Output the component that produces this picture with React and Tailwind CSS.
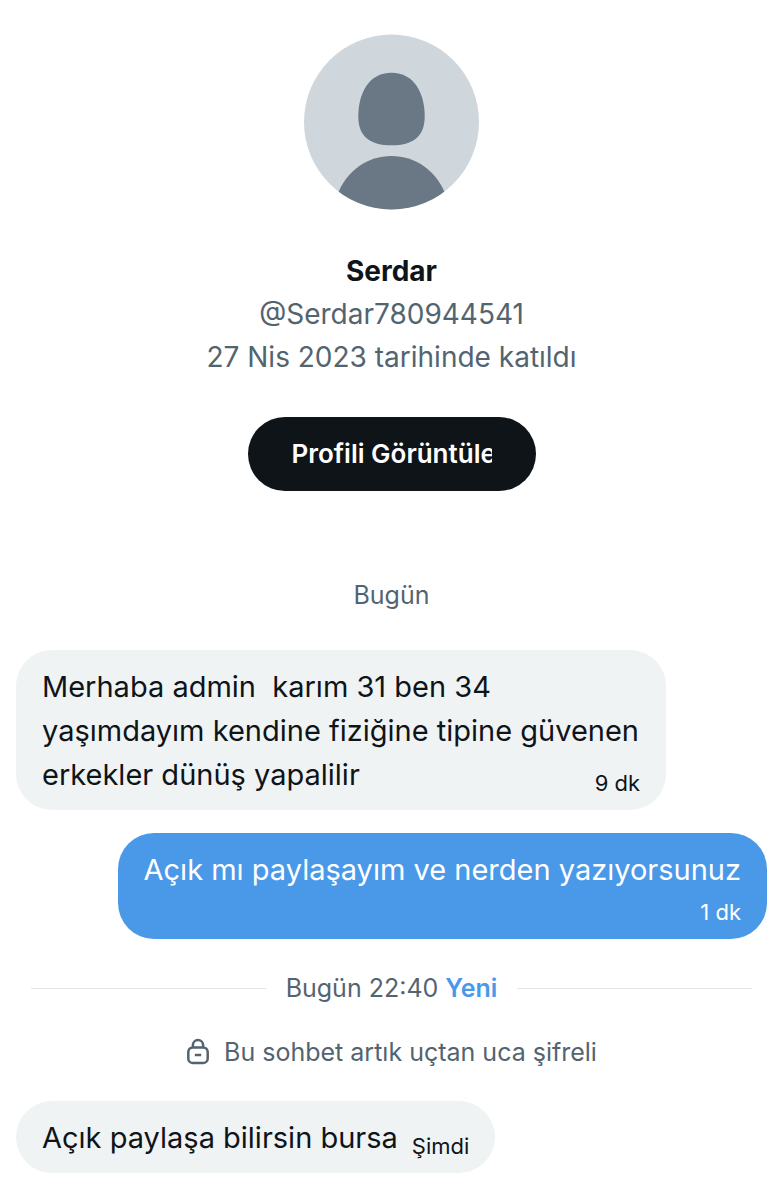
function Avatar() {
  return (
    <svg className="size-[176px]" viewBox="0 0 176 176" role="img" aria-label="Serdar">
      <defs>
        <clipPath id="disc">
          <circle cx="87.5" cy="88" r="87.5" />
        </clipPath>
      </defs>
      <circle cx="87.5" cy="88" r="87.5" fill="#cfd6dc" />
      <g fill="#6a7784" clipPath="url(#disc)">
        <path d="M87.5 38.7c23 0 33.2 21 33.2 43.8 0 20.5-12.2 28.8-33.2 28.8s-33.2-8.3-33.2-28.8c0-22.8 10.2-43.8 33.2-43.8z" />
        <path d="M33 162c9-26 31.500-40 54.500-40s45.500 14 54.500 40v14H33z" />
      </g>
    </svg>
  );
}

function LockIcon() {
  return (
    <svg className="h-[28px] w-[24px]" viewBox="0 0 24 28" fill="none" stroke="currentColor" strokeWidth="2.5" aria-hidden="true">
      <path d="M6.900 9.400V7.200a5.100 5.100 0 0 1 10.200 0v2.200" />
      <rect x="2.300" y="9.400" width="19.400" height="15.600" rx="4.600" />
      <path d="M8.800 17h6.400" />
    </svg>
  );
}

function Received({ text, time }) {
  return (
    <article className="max-w-[650px] self-start rounded-[36px] bg-[#eff3f4] px-[26px] pt-[15px] pb-[13px] text-[#0f1419]">
      <p className="text-[29px] leading-[44px] whitespace-pre-wrap">
        {text}
        <time className="float-right mt-4 ml-[14px] text-[22px] leading-[28px]">{time}</time>
      </p>
    </article>
  );
}

function Sent({ text, time }) {
  return (
    <article className="flex max-w-[650px] flex-col self-end rounded-[36px] bg-[#4a99e9] px-[26px] pt-[15px] pb-[7px] text-white">
      <p className="text-[29px] leading-[44px]">{text}</p>
      <time className="self-end text-[22px] leading-[40px]">{time}</time>
    </article>
  );
}

export default function App() {
  return (
    <main className="flex min-h-screen w-full flex-col bg-white px-4 pt-[34px] pb-6 font-['Inter',sans-serif] text-[25px] leading-[34px] text-[#536471]">
      <header className="flex flex-col items-center">
        <Avatar />
        <h1 className="mt-10 text-[28px] leading-[43px] font-bold text-[#0f1419]">Serdar</h1>
        <p className="text-[28px] leading-[43px]">@Serdar780944541</p>
        <p className="text-[28px] leading-[43px]">27 Nis 2023 tarihinde katıldı</p>
        <button type="button" className="mt-[38px] h-[74px] rounded-full bg-[#0f1419] px-11 font-semibold text-white">
          <span className="block w-[200px] overflow-hidden text-left text-[26px] whitespace-nowrap">Profili Görüntüle</span>
        </button>
      </header>
      <p className="mt-[87px] text-center">Bugün</p>
      <section className="mt-[38px] flex flex-col gap-[23px]">
        <Received text="Merhaba admin  karım 31 ben 34 yaşımdayım kendine fiziğine tipine güvenen erkekler dünüş yapalilir" time="9 dk" />
        <Sent text="Açık mı paylaşayım ve nerden yazıyorsunuz" time="1 dk" />
      </section>
      <div className="mt-8 flex items-center gap-5 px-[15px]">
        <span className="h-px flex-1 bg-[#e1e5e8]" />
        <p>
          Bugün 22:40 <span className="font-semibold text-[#4a99e9]">Yeni</span>
        </p>
        <span className="h-px flex-1 bg-[#e1e5e8]" />
      </div>
      <p className="mt-[30px] flex items-center justify-center gap-[14px]">
        <LockIcon />
        Bu sohbet artık uçtan uca şifreli
      </p>
      <section className="mt-8 flex flex-col">
        <Received text="Açık paylaşa bilirsin bursa" time="Şimdi" />
      </section>
    </main>
  );
}
